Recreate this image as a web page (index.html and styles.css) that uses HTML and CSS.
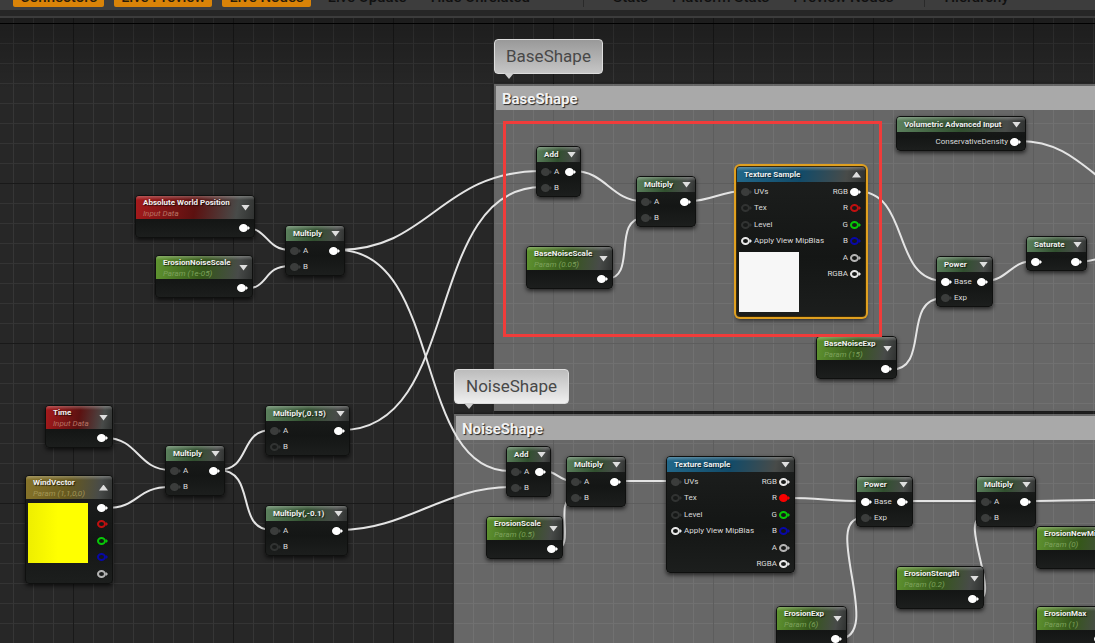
FILE: index.html
```html
<!DOCTYPE html>
<html lang="en">
<head>
<meta charset="utf-8">
<title>Material Graph</title>
<link rel="stylesheet" href="styles.css">
</head>
<body>
<div class="editor">
  <nav class="toolbar" aria-label="Graph toolbar">
    <div class="tools">
      <button class="tool tool-on" type="button">Connectors</button>
      <button class="tool tool-on" type="button">Live Preview</button>
      <button class="tool tool-on" type="button">Live Nodes</button>
      <button class="tool" type="button">Live Update</button>
      <button class="tool" type="button">Hide Unrelated</button>
    </div>
    <div class="tools tools-stats">
      <button class="tool" type="button">Stats</button>
      <button class="tool" type="button">Platform Stats</button>
      <button class="tool" type="button">Preview Nodes</button>
    </div>
    <div class="tools tools-view">
      <button class="tool" type="button">Hierarchy</button>
    </div>
  </nav>

  <main class="canvas">
    <section class="comment comment-base"><h2>BaseShape</h2></section>
    <section class="comment comment-noise"><h2>NoiseShape</h2></section>

    <svg class="wires" aria-hidden="true">
      <path d="M246 228C268 228 266 250 290 250"/>
      <path d="M244 289C270 289 262 266 290 266"/>
      <path d="M338 250C430 250 440 171 542 171"/>
      <path d="M338 250C444 250 412 471 510 471"/>
      <path d="M342 430C463 430 423 187 542 187"/>
      <path d="M340 530C405 530 445 487 510 487"/>
      <path d="M106 438C138 438 138 470 170 470"/>
      <path d="M106 508C140 508 135 487 170 487"/>
      <path d="M218 470C252 470 238 430 272 430"/>
      <path d="M218 470C258 470 234 530 272 530"/>
      <path d="M574 171C605 171 612 201 642 201"/>
      <path d="M606 279C638 279 611 218 644 218"/>
      <path d="M690 201C710 201 722 191 744 191"/>
      <path d="M856 191C912 191 890 281 944 281"/>
      <path d="M890 370C932 370 900 298 944 298"/>
      <path d="M985 281C1008 281 1010 261 1034 261"/>
      <path d="M1080 262C1090 262 1098 258 1110 256"/>
      <path d="M1020 141C1060 141 1080 163 1110 186"/>
      <path d="M545 471C556 471 560 481 572 481"/>
      <path d="M556 549C576 549 553 498 574 498"/>
      <path d="M620 481H672"/>
      <path d="M788 498C820 498 830 501 864 501"/>
      <path d="M906 501H982"/>
      <path d="M1030 501C1050 501 1080 500 1110 500"/>
      <path d="M838 639C886 639 820 518 862 518"/>
      <path d="M978 599C1001 599 959 518 982 518"/>
    </svg>

    <article class="node red tall n-awp">
      <header><div><h3>Absolute World Position</h3><p>Input Data</p></div><button class="fold" type="button" aria-label="Expand"></button></header>
      <div class="pins"><ul class="outs"><li><i class="pin full"></i></li></ul></div>
    </article>
    <article class="node green tall n-ens">
      <header><div><h3>ErosionNoiseScale</h3><p>Param (1e-05)</p></div><button class="fold" type="button" aria-label="Expand"></button></header>
      <div class="pins"><ul class="outs"><li><i class="pin full"></i></li></ul></div>
    </article>
    <article class="node n-mul1">
      <header><h3>Multiply</h3><button class="fold" type="button" aria-label="Expand"></button></header>
      <div class="pins"><ul><li><i class="pin full dim"></i>A</li><li><i class="pin full dim"></i>B</li></ul><ul class="outs"><li><i class="pin full"></i></li></ul></div>
    </article>
    <article class="node red tall n-time">
      <header><div><h3>Time</h3><p>Input Data</p></div><button class="fold" type="button" aria-label="Expand"></button></header>
      <div class="pins"><ul class="outs"><li><i class="pin full"></i></li></ul></div>
    </article>
    <article class="node yellow tall n-wind">
      <header><div><h3>WindVector</h3><p>Param (1,1,0,0)</p></div><button class="fold up" type="button" aria-label="Collapse"></button></header>
      <div class="pins">
        <div class="swatch swatch-yellow"></div>
        <ul class="outs"><li><i class="pin full"></i></li><li><i class="pin r"></i></li><li><i class="pin g"></i></li><li><i class="pin b"></i></li><li><i class="pin a"></i></li></ul>
      </div>
    </article>
    <article class="node n-mul3">
      <header><h3>Multiply</h3><button class="fold" type="button" aria-label="Expand"></button></header>
      <div class="pins"><ul><li><i class="pin full dim"></i>A</li><li><i class="pin full dim"></i>B</li></ul><ul class="outs"><li><i class="pin full"></i></li></ul></div>
    </article>
    <article class="node n-mul15">
      <header><h3>Multiply(,0.15)</h3><button class="fold" type="button" aria-label="Expand"></button></header>
      <div class="pins"><ul><li><i class="pin full dim"></i>A</li><li><i class="pin dim"></i>B</li></ul><ul class="outs"><li><i class="pin full"></i></li></ul></div>
    </article>
    <article class="node n-mul01">
      <header><h3>Multiply(,-0.1)</h3><button class="fold" type="button" aria-label="Expand"></button></header>
      <div class="pins"><ul><li><i class="pin full dim"></i>A</li><li><i class="pin dim"></i>B</li></ul><ul class="outs"><li><i class="pin full"></i></li></ul></div>
    </article>

    <article class="node n-add1">
      <header><h3>Add</h3><button class="fold" type="button" aria-label="Expand"></button></header>
      <div class="pins"><ul><li><i class="pin full dim"></i>A</li><li><i class="pin full dim"></i>B</li></ul><ul class="outs"><li><i class="pin full"></i></li></ul></div>
    </article>
    <article class="node n-mul2">
      <header><h3>Multiply</h3><button class="fold" type="button" aria-label="Expand"></button></header>
      <div class="pins"><ul><li><i class="pin full dim"></i>A</li><li><i class="pin full dim"></i>B</li></ul><ul class="outs"><li><i class="pin full"></i></li></ul></div>
    </article>
    <article class="node green tall n-bns">
      <header><div><h3>BaseNoiseScale</h3><p>Param (0.05)</p></div><button class="fold" type="button" aria-label="Expand"></button></header>
      <div class="pins"><ul class="outs"><li><i class="pin full"></i></li></ul></div>
    </article>
    <article class="node blue selected n-tex1">
      <header><h3>Texture Sample</h3><button class="fold up" type="button" aria-label="Collapse"></button></header>
      <div class="pins">
        <div>
          <ul><li><i class="pin full dim"></i>UVs</li><li><i class="pin dim"></i>Tex</li><li><i class="pin dim"></i>Level</li><li><i class="pin"></i>Apply View MipBias</li></ul>
          <div class="swatch swatch-white"></div>
        </div>
        <ul class="outs"><li>RGB<i class="pin full"></i></li><li>R<i class="pin r"></i></li><li>G<i class="pin g"></i></li><li>B<i class="pin b"></i></li><li>A<i class="pin a"></i></li><li>RGBA<i class="pin"></i></li></ul>
      </div>
    </article>
    <article class="node n-vol">
      <header><h3>Volumetric Advanced Input</h3><button class="fold" type="button" aria-label="Expand"></button></header>
      <div class="pins"><ul class="outs"><li>ConservativeDensity<i class="pin full"></i></li></ul></div>
    </article>
    <article class="node n-pow1">
      <header><h3>Power</h3><button class="fold" type="button" aria-label="Expand"></button></header>
      <div class="pins"><ul><li><i class="pin full"></i>Base</li><li><i class="pin full dim"></i>Exp</li></ul><ul class="outs"><li><i class="pin full"></i></li></ul></div>
    </article>
    <article class="node n-sat">
      <header><h3>Saturate</h3><button class="fold" type="button" aria-label="Expand"></button></header>
      <div class="pins"><ul><li><i class="pin full"></i></li></ul><ul class="outs"><li><i class="pin full"></i></li></ul></div>
    </article>
    <article class="node green tall n-bne">
      <header><div><h3>BaseNoiseExp</h3><p>Param (15)</p></div><button class="fold" type="button" aria-label="Expand"></button></header>
      <div class="pins"><ul class="outs"><li><i class="pin full"></i></li></ul></div>
    </article>

    <article class="node n-add2">
      <header><h3>Add</h3><button class="fold" type="button" aria-label="Expand"></button></header>
      <div class="pins"><ul><li><i class="pin full dim"></i>A</li><li><i class="pin full dim"></i>B</li></ul><ul class="outs"><li><i class="pin full"></i></li></ul></div>
    </article>
    <article class="node n-mul4">
      <header><h3>Multiply</h3><button class="fold" type="button" aria-label="Expand"></button></header>
      <div class="pins"><ul><li><i class="pin full dim"></i>A</li><li><i class="pin full dim"></i>B</li></ul><ul class="outs"><li><i class="pin full"></i></li></ul></div>
    </article>
    <article class="node green tall n-es">
      <header><div><h3>ErosionScale</h3><p>Param (0.5)</p></div><button class="fold" type="button" aria-label="Expand"></button></header>
      <div class="pins"><ul class="outs"><li><i class="pin full"></i></li></ul></div>
    </article>
    <article class="node blue n-tex2">
      <header><h3>Texture Sample</h3><button class="fold" type="button" aria-label="Expand"></button></header>
      <div class="pins">
        <ul><li><i class="pin full dim"></i>UVs</li><li><i class="pin dim"></i>Tex</li><li><i class="pin dim"></i>Level</li><li><i class="pin"></i>Apply View MipBias</li></ul>
        <ul class="outs"><li>RGB<i class="pin"></i></li><li>R<i class="pin full r"></i></li><li>G<i class="pin g"></i></li><li>B<i class="pin b"></i></li><li>A<i class="pin a"></i></li><li>RGBA<i class="pin"></i></li></ul>
      </div>
    </article>
    <article class="node n-pow2">
      <header><h3>Power</h3><button class="fold" type="button" aria-label="Expand"></button></header>
      <div class="pins"><ul><li><i class="pin full"></i>Base</li><li><i class="pin full dim"></i>Exp</li></ul><ul class="outs"><li><i class="pin full"></i></li></ul></div>
    </article>
    <article class="node n-mul5">
      <header><h3>Multiply</h3><button class="fold" type="button" aria-label="Expand"></button></header>
      <div class="pins"><ul><li><i class="pin full dim"></i>A</li><li><i class="pin full dim"></i>B</li></ul><ul class="outs"><li><i class="pin full"></i></li></ul></div>
    </article>
    <article class="node green tall n-enm">
      <header><div><h3>ErosionNewMin</h3><p>Param (0)</p></div><button class="fold" type="button" aria-label="Expand"></button></header>
      <div class="pins"><ul class="outs"><li><i class="pin full"></i></li></ul></div>
    </article>
    <article class="node green tall n-est">
      <header><div><h3>ErosionStength</h3><p>Param (0.2)</p></div><button class="fold" type="button" aria-label="Expand"></button></header>
      <div class="pins"><ul class="outs"><li><i class="pin full"></i></li></ul></div>
    </article>
    <article class="node green tall n-ee">
      <header><div><h3>ErosionExp</h3><p>Param (6)</p></div><button class="fold" type="button" aria-label="Expand"></button></header>
      <div class="pins"><ul class="outs"><li><i class="pin full"></i></li></ul></div>
    </article>
    <article class="node green tall n-em">
      <header><div><h3>ErosionMax</h3><p>Param (1)</p></div><button class="fold" type="button" aria-label="Expand"></button></header>
      <div class="pins"><ul class="outs"><li><i class="pin full"></i></li></ul></div>
    </article>

    <div class="bubble bubble-base">BaseShape</div>
    <div class="bubble bubble-noise">NoiseShape</div>
    <div class="highlight"></div>
  </main>
</div>
</body>
</html>
```

FILE: styles.css
```css
*, *::before, *::after { box-sizing: border-box; }

body {
  margin: 0;
  background: #262626;
  font-family: Roboto, "Liberation Sans", sans-serif;
}

h2, h3, p, ul { margin: 0; padding: 0; }
ul { list-style: none; }

.editor {
  display: grid;
  height: 100vh;
  overflow: hidden;
}

.toolbar, .canvas { grid-area: 1 / 1; }

/* Toolbar: lies over the top edge of the canvas */
.toolbar {
  z-index: 2;
  align-self: start;
  display: flex;
  align-items: flex-end;
  height: 18px;
  padding: 0 0 11px 13px;
  overflow: hidden;
  background: linear-gradient(#3d3d3d 10px, #262626 10px, #262626 16px, #3c3c3c 16px);
}

.tools { display: flex; gap: 10px; }
.tools-stats { margin-left: 46px; padding-left: 22px; border-left: 1px solid #2a2a2a; }
.tools-view { margin-left: 24px; padding-left: 12px; border-left: 1px solid #2a2a2a; }

.tool {
  flex: none;
  padding: 0 7px 2px;
  border: 0;
  border-radius: 2px;
  background: none;
  color: #101010;
  font: 500 15px/16px Roboto, "Liberation Sans", sans-serif;
  white-space: nowrap;
}

.tool-on { background: #d98308; color: #2a1c08; }

/* Canvas and its 20px grid, with a heavy line every 160px */
.canvas {
  position: relative;
  overflow: hidden;
  background-color: #272727;
  background-image:
    linear-gradient(#0005, #0000 90px),
    linear-gradient(90deg, #191919 1px, transparent 1px),
    linear-gradient(#191919 1px, transparent 1px),
    linear-gradient(90deg, #363636 1px, transparent 1px),
    linear-gradient(#343434 1px, transparent 1px);
  background-size: auto, 160px 160px, 160px 160px, 20px 20px, 20px 20px;
  background-position: 0 0, 73px 0, 0 23px, 13px 0, 0 3px;
}

.canvas::before {
  content: "";
  position: absolute;
  top: 23px;
  left: 0;
  right: 0;
  height: 1px;
  background: #000;
}

.comment {
  position: absolute;
  right: -4px;
  border: 2px solid #6666;
  background: #ffffff4c;
  box-shadow: 0 0 3px #000a;
}

.comment h2 {
  height: 24px;
  padding-left: 6px;
  background: #a9a9a9;
  color: #f2f2f2;
  font-size: 15px;
  font-weight: 700;
  line-height: 26px;
  text-shadow: 1px 1px 1px #222;
}

.comment-base { left: 494px; top: 84px; height: 327px; }
.comment-noise { left: 454px; top: 414px; bottom: -4px; }

.wires {
  position: absolute;
  inset: 0;
  width: 100%;
  height: 100%;
  fill: none;
  stroke: #e4e4e4;
  stroke-width: 2;
}

/* Nodes */
.node {
  --tint: #5c815e;
  --deep: #31502f;
  position: absolute;
  border: 1px solid #0f100f;
  border-radius: 4px;
  overflow: hidden;
  background: linear-gradient(#1d1f1e, #141615 60%, #1c1e1d);
  box-shadow: 0 2px 4px #000a;
  color: #dcdcdc;
  font-size: 8px;
  line-height: 16px;
}

.red { --tint: #a61a1c; --deep: #5c1110; --note: #b87464; }
.green { --tint: #609530; --deep: #35571a; --note: #7da25c; }
.yellow { --tint: #87742a; --deep: #66591f; --note: #a39655; }
.blue { --tint: #22688a; --deep: #124b69; }

.node header {
  display: flex;
  justify-content: space-between;
  align-items: center;
  height: 15px;
  padding: 0 4px 0 7px;
  background:
    linear-gradient(#fff4, #fff0 4px),
    linear-gradient(100deg, var(--tint), var(--deep) 50%, #484b49 85%, #303231);
}

.tall header { height: 23px; }

.node h3 {
  color: #f0f0f0;
  font-size: 8px;
  font-weight: 700;
  line-height: 15px;
  text-shadow: 1px 1px 1px #000a;
  white-space: nowrap;
}

.tall h3 { line-height: 11px; }

.node p {
  color: var(--note);
  font-size: 8px;
  font-style: italic;
  line-height: 11px;
  white-space: nowrap;
}

.fold {
  flex: none;
  width: 9px;
  height: 6px;
  padding: 0;
  border: 0;
  background: #dedede;
  clip-path: polygon(0 0, 100% 0, 50% 100%);
}

.fold.up { clip-path: polygon(50% 0, 100% 100%, 0 100%); }

.pins {
  display: flex;
  justify-content: space-between;
  padding: 2px 4px 0;
}

.tall .pins { padding: 1px 4px; }

.pins li {
  display: flex;
  align-items: center;
  gap: 2px;
  height: 16px;
  white-space: nowrap;
}

.pins li:nth-child(even):not(:last-child) { margin-bottom: 1px; }

.outs { margin-left: auto; }
.outs li { justify-content: flex-end; }

.pin {
  display: flex;
  flex: none;
  align-items: center;
  width: 11px;
  color: #e8e8e8;
}

.pin::before {
  content: "";
  width: 9px;
  height: 8px;
  border: 2px solid;
  border-radius: 50%;
}

.pin::after {
  content: "";
  border: solid transparent;
  border-width: 2px 0 2px 2px;
  border-left-color: currentColor;
}

.pin.full { color: #fff; }
.pin.full::before { background: currentColor; }
.pin.dim { color: #313332; }
.pin.full.dim { color: #3b3d3c; }
.pin.r { color: #c01010; }
.pin.full.r { color: #f80000; }
.pin.g { color: #08c808; }
.pin.b { color: #0808a8; }
.pin.a { color: #b4b4b4; }

.swatch { width: 60px; height: 60px; }
.swatch-yellow { margin: 3px 0 0 -2px; background: linear-gradient(90deg, #eeee00, #ffff00 50%); }
.swatch-white { margin: 3px 0 0 -2px; background: #f7f7f7; }

.selected {
  border-color: #3a2a08;
  box-shadow: 0 0 0 2px #e0a020, 0 3px 5px #000a;
}

/* Node places on the canvas */
.n-awp { left: 135px; top: 195px; width: 120px; }
.n-ens { left: 155px; top: 255px; width: 98px; }
.n-mul1 { left: 285px; top: 225px; width: 60px; }
.n-time { left: 45px; top: 405px; width: 68px; }
.n-wind { left: 25px; top: 475px; width: 88px; height: 109px; }
.n-mul3 { left: 165px; top: 445px; width: 60px; }
.n-mul15 { left: 265px; top: 405px; width: 85px; }
.n-mul01 { left: 265px; top: 505px; width: 83px; }
.n-add1 { left: 536px; top: 146px; width: 45px; }
.n-mul2 { left: 636px; top: 176px; width: 60px; }
.n-bns { left: 526px; top: 246px; width: 87px; }
.n-tex1 { left: 736px; top: 166px; width: 130px; height: 151px; }
.n-vol { left: 896px; top: 116px; width: 130px; }
.n-pow1 { left: 936px; top: 256px; width: 57px; }
.n-sat { left: 1026px; top: 236px; width: 61px; }
.n-bne { left: 816px; top: 336px; width: 81px; }
.n-add2 { left: 506px; top: 446px; width: 45px; }
.n-mul4 { left: 566px; top: 456px; width: 60px; }
.n-es { left: 486px; top: 516px; width: 77px; }
.n-tex2 { left: 666px; top: 456px; width: 129px; height: 117px; }
.n-pow2 { left: 856px; top: 476px; width: 57px; }
.n-mul5 { left: 976px; top: 476px; width: 60px; }
.n-enm { left: 1036px; top: 526px; width: 90px; }
.n-est { left: 896px; top: 566px; width: 88px; }
.n-ee { left: 776px; top: 606px; width: 71px; }
.n-em { left: 1036px; top: 606px; width: 74px; }

/* Comment bubbles */
.bubble {
  position: absolute;
  padding: 0 11px;
  border: 1px solid #ddd;
  border-radius: 4px;
  color: #484848;
  font-size: 17px;
  line-height: 33px;
}

.bubble::after {
  content: "";
  position: absolute;
  top: 100%;
  left: 9px;
  border: solid transparent;
  border-width: 6px 5px 0;
  border-top-color: #cfcfcf;
}

.bubble-base { left: 494px; top: 39px; background: linear-gradient(#999, #c6c6c6); }
.bubble-noise { left: 454px; top: 369px; background: linear-gradient(#bcbcbc, #efefef); }

.highlight {
  position: absolute;
  left: 503px;
  top: 121px;
  width: 379px;
  height: 216px;
  border: 3px solid #f03c3a;
  pointer-events: none;
}
```
